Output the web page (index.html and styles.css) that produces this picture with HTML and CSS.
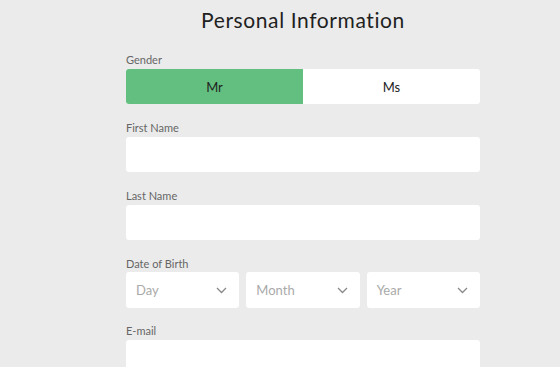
FILE: index.html
```html
<!DOCTYPE html>
<html lang="en">
<head>
  <meta charset="UTF-8">
  <title>Personal Information</title>
  <link rel="stylesheet" href="styles.css">
</head>
<body>
  <div class="form">
    <div class="title">Personal Information</div>
    <div class="field">
      <div class="label">Gender</div>
      <div class="toggle">
        <div class="toggle-opt active">Mr</div>
        <div class="toggle-opt">Ms</div>
      </div>
    </div>
    <div class="field">
      <div class="label">First Name</div>
      <div class="input"></div>
    </div>
    <div class="field">
      <div class="label">Last Name</div>
      <div class="input"></div>
    </div>
    <div class="field dob-field">
      <div class="label">Date of Birth</div>
      <div class="dob">
        <div class="select"><span>Day</span><svg width="11" height="7" viewBox="0 0 11 7"><path d="M1 1l4.5 4.5L10 1" fill="none" stroke="#888" stroke-width="1.3"/></svg></div>
        <div class="select"><span>Month</span><svg width="11" height="7" viewBox="0 0 11 7"><path d="M1 1l4.5 4.5L10 1" fill="none" stroke="#888" stroke-width="1.3"/></svg></div>
        <div class="select"><span>Year</span><svg width="11" height="7" viewBox="0 0 11 7"><path d="M1 1l4.5 4.5L10 1" fill="none" stroke="#888" stroke-width="1.3"/></svg></div>
      </div>
    </div>
    <div class="field">
      <div class="label">E-mail</div>
      <div class="input"></div>
    </div>
  </div>
</body>
</html>
```

FILE: styles.css
```css
body { background: #ebebeb; font-family: Lato, 'Noto Sans', sans-serif; margin: 0; }
.form { width: 354px; margin-left: 126px; }
.title { font-size: 21px; line-height: 26px; color: #1f1f1f; text-align: center; padding-top: 7px; margin-bottom: 20px; letter-spacing: 0.6px; }
.field { margin-bottom: 17px; }
.label { font-size: 11px; line-height: 13px; color: #666; margin-bottom: 3px; }
.toggle { display: flex; height: 35px; border-radius: 3px; overflow: hidden; background: #fff; }
.toggle-opt { flex: 1; display: flex; align-items: center; justify-content: center; font-size: 13px; color: #222; }
.toggle-opt.active { background: #63bf7f; }
.input { height: 35px; background: #fff; border-radius: 3px; }
.dob-field { margin-bottom: 16px; }
.dob-field .label { margin-bottom: 2px; }
.dob { display: flex; gap: 7px; }
.select { flex: 1; height: 36px; background: #fff; border-radius: 3px; display: flex; align-items: center; justify-content: space-between; padding: 0 12px 0 10px; font-size: 13px; color: #aaa; }
```
